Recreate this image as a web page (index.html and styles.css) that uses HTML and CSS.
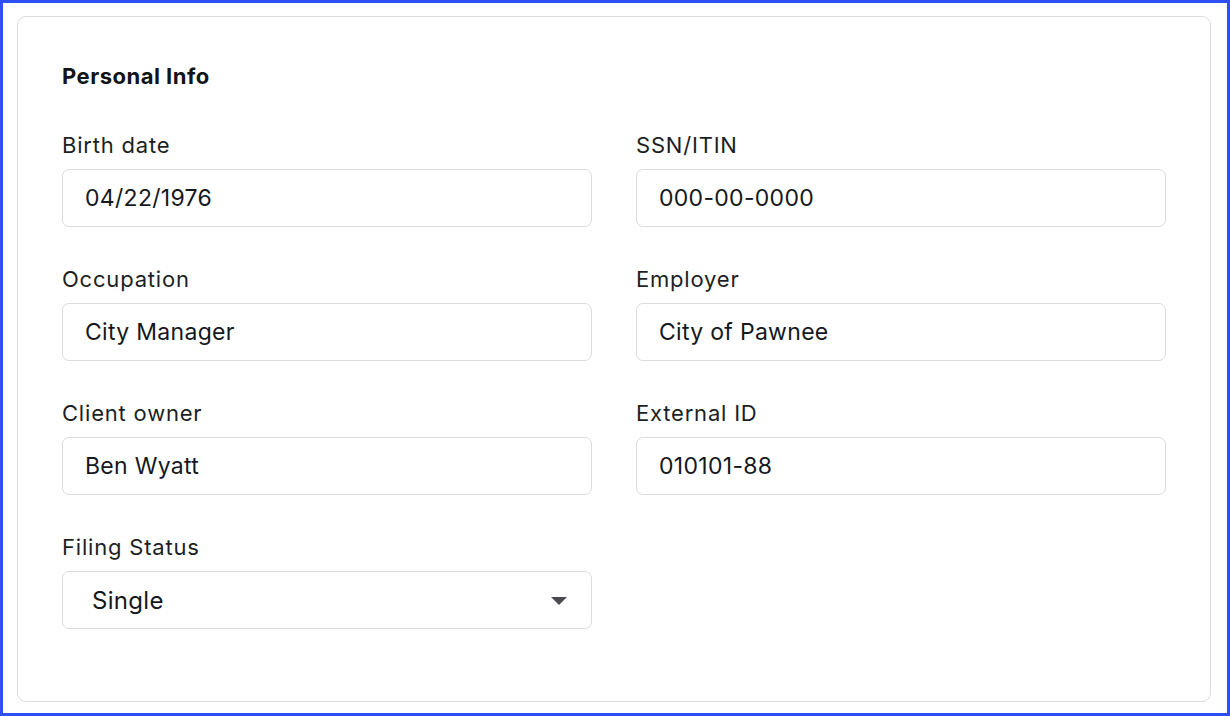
FILE: index.html
```html
<!doctype html>
<html lang="en">
<head>
	<meta charset="UTF-8">
	<title>Personal Info</title>
	<link rel="stylesheet" href="styles.css">
</head>
<body>
<div class="frame">
	<section class="card">
		<h2 class="card_title">Personal Info</h2>
		<div class="fields">
			<div class="field">
				<label>Birth date</label>
				<div class="input">04/22/1976</div>
			</div>
			<div class="field">
				<label>SSN/ITIN</label>
				<div class="input">000-00-0000</div>
			</div>
			<div class="field">
				<label>Occupation</label>
				<div class="input">City Manager</div>
			</div>
			<div class="field">
				<label>Employer</label>
				<div class="input">City of Pawnee</div>
			</div>
			<div class="field">
				<label>Client owner</label>
				<div class="input">Ben Wyatt</div>
			</div>
			<div class="field">
				<label>External ID</label>
				<div class="input">010101-88</div>
			</div>
			<div class="field">
				<label>Filing Status</label>
				<div class="input select">
					<span>Single</span>
					<svg width="16" height="9" viewBox="0 0 16 9"><path d="M0 0 H16 L8 8 Z" fill="#4a4a4f"/></svg>
				</div>
			</div>
		</div>
	</section>
</div>
</body>
</html>
```

FILE: styles.css
```css
*{margin:0;padding:0;box-sizing:border-box}
body{
	font-family:Inter,"Liberation Sans",sans-serif;
	color:#16191d;
	background:#fff;
}
.frame{
	width:1230px;
	height:716px;
	border:3px solid #2f4ff6;
	padding:13px 16px 0 14px;
}
.card{
	height:686px;
	border:1px solid #dcdcdc;
	border-radius:9px;
	padding:46px 44px 0 44px;
}
.card_title{
	font-size:22px;
	font-weight:700;
	line-height:26px;
	letter-spacing:0.5px;
	color:#111418;
}
.fields{
	margin-top:44px;
	display:grid;
	grid-template-columns:530px 530px;
	column-gap:44px;
	row-gap:40px;
}
.field label{
	display:block;
	font-size:22px;
	line-height:24px;
	letter-spacing:0.8px;
	color:#1c1f23;
	margin-bottom:12px;
}
.input{
	height:58px;
	border:1px solid #dcdcdc;
	border-radius:7px;
	padding:0 22px;
	display:flex;
	align-items:center;
	font-size:23px;
	letter-spacing:0.3px;
	color:#15181c;
}
.select{
	padding:0 24px 0 29px;
	justify-content:space-between;
	font-size:24px;
	letter-spacing:0.3px;
}
.select svg{margin-top:2px}
```
